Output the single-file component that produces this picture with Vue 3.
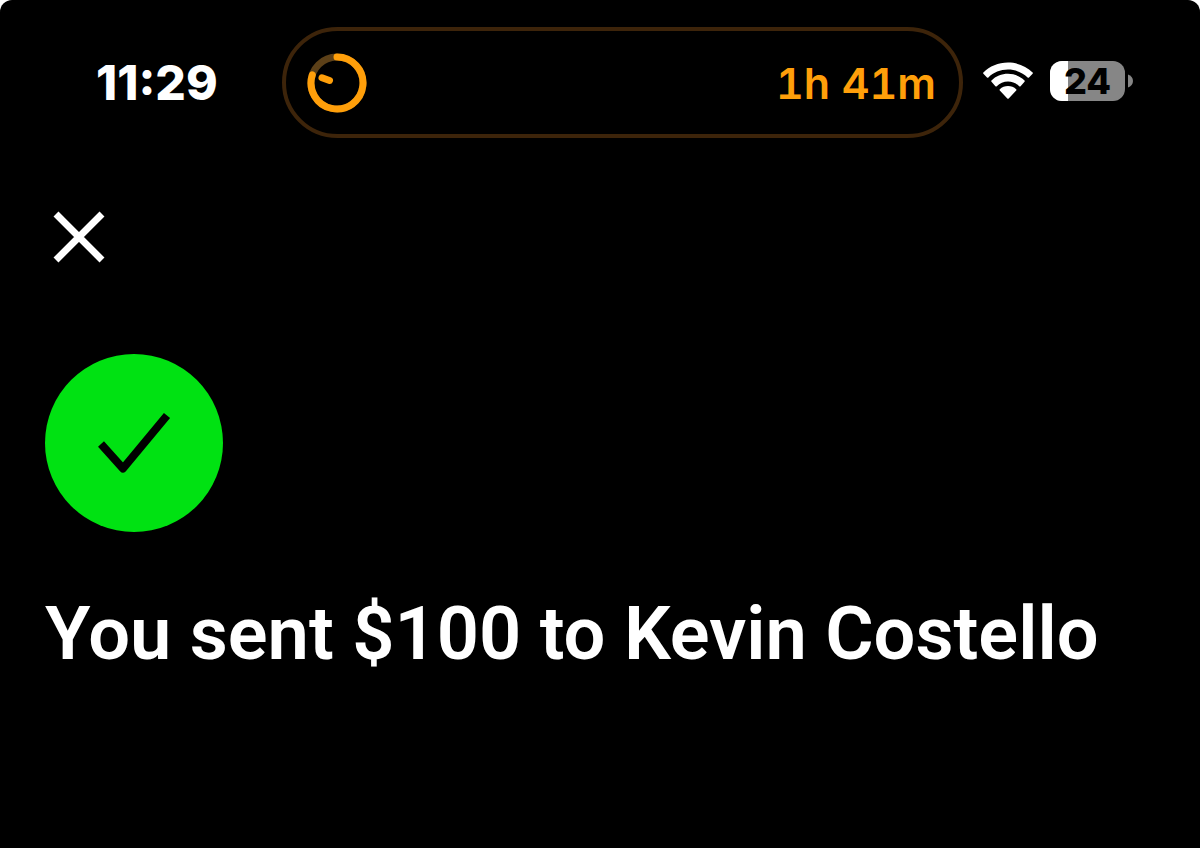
<template>
  <main class="screen">
    <header class="status-bar">
      <time class="clock">{{ clock }}</time>
      <div class="island">
        <svg class="timer-icon" viewBox="0 0 60 60" aria-hidden="true">
          <circle class="timer-track" cx="30" cy="30" r="26" />
          <path class="timer-line" d="M30 4A26 26 0 1 1 5.3 21.9" />
          <path class="timer-line" d="M15 24.8L22.5 27.5" />
        </svg>
        <span class="remaining">{{ remaining }}</span>
      </div>
      <div class="indicators">
        <svg class="wifi-icon" viewBox="0 0 50 38" role="img" aria-label="Wi-Fi">
          <path d="M25 0.5C34.7 0.5 43.4 4.3 49.6 10.4Q50.3 11.1 49.6 11.8L46 15.4Q45.3 16 44.6 15.4C39.5 10.5 32.6 7.6 25 7.6S10.5 10.5 5.4 15.4Q4.7 16 4 15.4L0.4 11.8Q-0.3 11.1 0.4 10.4C6.6 4.3 15.3 0.5 25 0.5Z" />
          <path d="M25 11.8C31.4 11.8 37.2 14.3 41.5 18.4Q42.2 19.1 41.5 19.8L37.6 24.2Q36.9 24.8 36.2 24.2C33.3 21.5 29.3 19.6 25 19.6S16.7 21.5 13.8 24.2Q13.1 24.8 12.4 24.2L8.5 19.8Q7.8 19.1 8.5 18.4C12.8 14.3 18.6 11.8 25 11.8Z" />
          <path d="M25 24C28.1 24 31 25.2 33.2 27.2Q33.9 27.9 33.2 28.6L25.7 36.5Q25 37.2 24.3 36.5L16.8 28.6Q16.1 27.9 16.8 27.2C19 25.2 21.9 24 25 24Z" />
        </svg>
        <div class="battery">
          <div class="battery-body">
            <div class="battery-fill" :style="{ width: battery + '%' }"></div>
            <span class="battery-level">{{ battery }}</span>
          </div>
          <svg class="battery-cap" viewBox="0 0 5 14" aria-hidden="true">
            <path d="M0 0.5C3 1.5 5 4 5 7S3 12.5 0 13.5Z" />
          </svg>
        </div>
      </div>
    </header>

    <button class="close" type="button" aria-label="Close">
      <svg viewBox="0 0 52 52" aria-hidden="true">
        <path d="M3 3L49 49M49 3L3 49" />
      </svg>
    </button>

    <section class="receipt">
      <svg class="success-icon" viewBox="0 0 178 178" aria-hidden="true">
        <circle cx="89" cy="89" r="89" />
        <path d="M56 90L78 114.5L122 61.5" />
      </svg>
      <h1 class="title">You sent {{ amount }} to {{ recipient }}</h1>
    </section>
  </main>
</template>

<script setup>
import { ref } from 'vue'

const clock = ref('11:29')
const remaining = ref('1h 41m')
const battery = ref(24)

const amount = ref('$100')
const recipient = ref('Kevin Costello')
</script>

<style>
body {
  background: #fff;
}
</style>

<style scoped>
.screen {
  min-height: 100vh;
  box-sizing: border-box;
  padding: 27px 45px 45px;
  border-radius: 12px 12px 0 0;
  background: #000;
  color: #fff;
  font-family: Inter, 'Liberation Sans', sans-serif;
}

.status-bar {
  display: flex;
  align-items: center;
  height: 111px;
}

.clock {
  width: 186px;
  margin-left: 51px;
  font-size: 48px;
  line-height: 56px;
  font-weight: 800;
}

.island {
  flex: 1;
  display: flex;
  align-items: center;
  justify-content: space-between;
  box-sizing: border-box;
  height: 111px;
  padding: 0 23px 0 21px;
  border: 4px solid #3d240a;
  border-radius: 56px;
}

.timer-icon {
  width: 60px;
  height: 60px;
  fill: none;
  stroke-width: 7;
  stroke-linecap: round;
}

.timer-track {
  stroke: #5c4018;
}

.timer-line {
  stroke: #ff9f0a;
}

.remaining {
  color: #ff9f0a;
  font-size: 43px;
  line-height: 52px;
  font-weight: 600;
  font-variant-numeric: tabular-nums;
}

.indicators {
  display: flex;
  align-items: center;
  gap: 17px;
  margin: 0 22px 4px 20px;
}

.wifi-icon {
  width: 50px;
  height: 38px;
  fill: #fff;
}

.battery {
  display: flex;
  align-items: center;
  gap: 3px;
}

.battery-body {
  position: relative;
  width: 75px;
  height: 40px;
  border-radius: 12px;
  background: #868686;
}

.battery-fill {
  height: 100%;
  border-radius: 12px 0 0 12px;
  background: #fff;
}

.battery-level {
  position: absolute;
  inset: 0;
  color: #000;
  font-size: 36px;
  line-height: 40px;
  font-weight: 800;
  text-align: center;
}

.battery-cap {
  width: 5px;
  height: 14px;
  fill: #868686;
}

.close {
  display: block;
  margin: 73px 0 0 8px;
  padding: 0;
  border: 0;
  background: none;
  cursor: pointer;
}

.close svg {
  display: block;
  width: 52px;
  height: 52px;
  fill: none;
  stroke: #fff;
  stroke-width: 7;
}

.receipt {
  margin-top: 91px;
}

.success-icon {
  display: block;
  width: 178px;
  height: 178px;
}

.success-icon circle {
  fill: #00e212;
}

.success-icon path {
  fill: none;
  stroke: #000;
  stroke-width: 8;
  stroke-linejoin: round;
}

.title {
  margin: 54px 0 0;
  font-family: Roboto, 'Liberation Sans', sans-serif;
  font-size: 74px;
  line-height: 96px;
  font-weight: 600;
}
</style>
